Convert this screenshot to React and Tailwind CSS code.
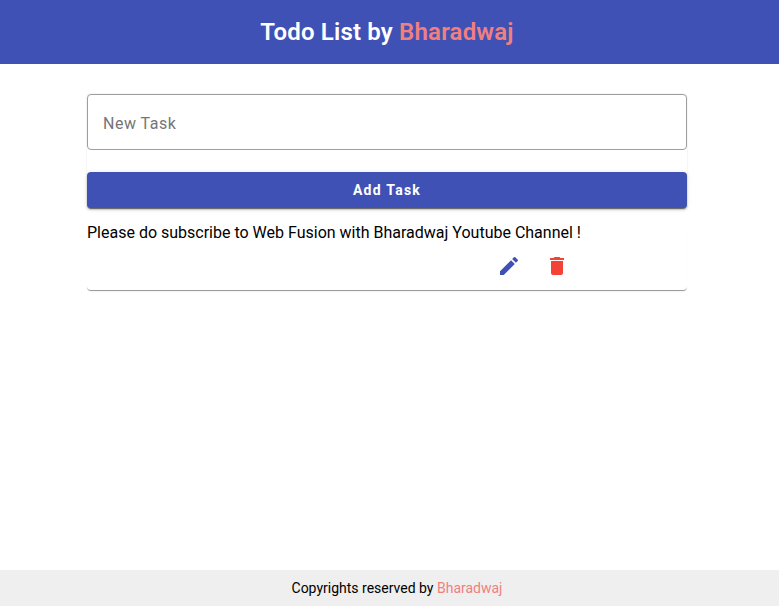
export default function App() {
  return (
    <div className="flex h-[606px] flex-col bg-white font-['Roboto',sans-serif] text-black">
      <header className="flex h-16 items-center justify-center bg-[#3f51b5] pr-[5px] text-2xl font-semibold tracking-[0.18px] text-white">
        <h1>
          Todo List by <span className="text-[#f08080]">Bharadwaj</span>
        </h1>
      </header>
      <main className="flex-1 pt-[30px] pl-[87px]">
        <section className="h-[115px] w-[600px] rounded-t bg-white shadow-[0_0_2px_0_rgba(0,0,0,0.14)]">
          <input
            placeholder="New Task"
            className="block h-14 w-full rounded border border-[#9e9e9e] px-[15px] pt-0.5 text-base tracking-[0.5px] placeholder:text-[#757575]"
          />
          <button className="mt-[22px] flex h-9 w-full items-center justify-center rounded bg-[#3f51b5] text-sm font-bold tracking-[1.25px] text-white shadow-[0_3px_1px_-2px_rgba(0,0,0,0.2),0_2px_2px_0_rgba(0,0,0,0.14),0_1px_5px_0_rgba(0,0,0,0.12),0_1px_0_0_rgba(0,0,0,0.35)]">
            Add Task
          </button>
        </section>
        <section className="mt-[14px] flex h-[67px] w-[600px] flex-col rounded-b bg-white shadow-[0_1px_0_0_rgba(0,0,0,0.24),0_2px_1px_-1px_rgba(0,0,0,0.14),0_2px_2px_-1px_rgba(0,0,0,0.1)]">
          <p className="-mt-2 text-base leading-[36px]">Please do subscribe to Web Fusion with Bharadwaj Youtube Channel !</p>
          <div className="mt-[3px] flex gap-6 pl-[410px]">
            <svg viewBox="0 0 24 24" className="size-6 fill-[#3f51b5]">
              <path d="M3 17.25V21h3.75L17.81 9.94l-3.75-3.75L3 17.25zM20.71 7.04a1 1 0 0 0 0-1.41l-2.34-2.34a1 1 0 0 0-1.41 0l-1.83 1.83 3.75 3.75 1.83-1.83z" />
            </svg>
            <svg viewBox="0 0 24 24" className="size-6 fill-[#f44336]">
              <path d="M6 19c0 1.1.9 2 2 2h8c1.1 0 2-.9 2-2V7H6v12zM19 4h-3.5l-1-1h-5l-1 1H5v2h14V4z" />
            </svg>
          </div>
        </section>
      </main>
      <footer className="flex h-9 items-center justify-center bg-[#efefef] pl-[15px] text-sm">
        <p>
          Copyrights reserved by <span className="text-[#f08080]">Bharadwaj</span>
        </p>
      </footer>
    </div>
  );
}
